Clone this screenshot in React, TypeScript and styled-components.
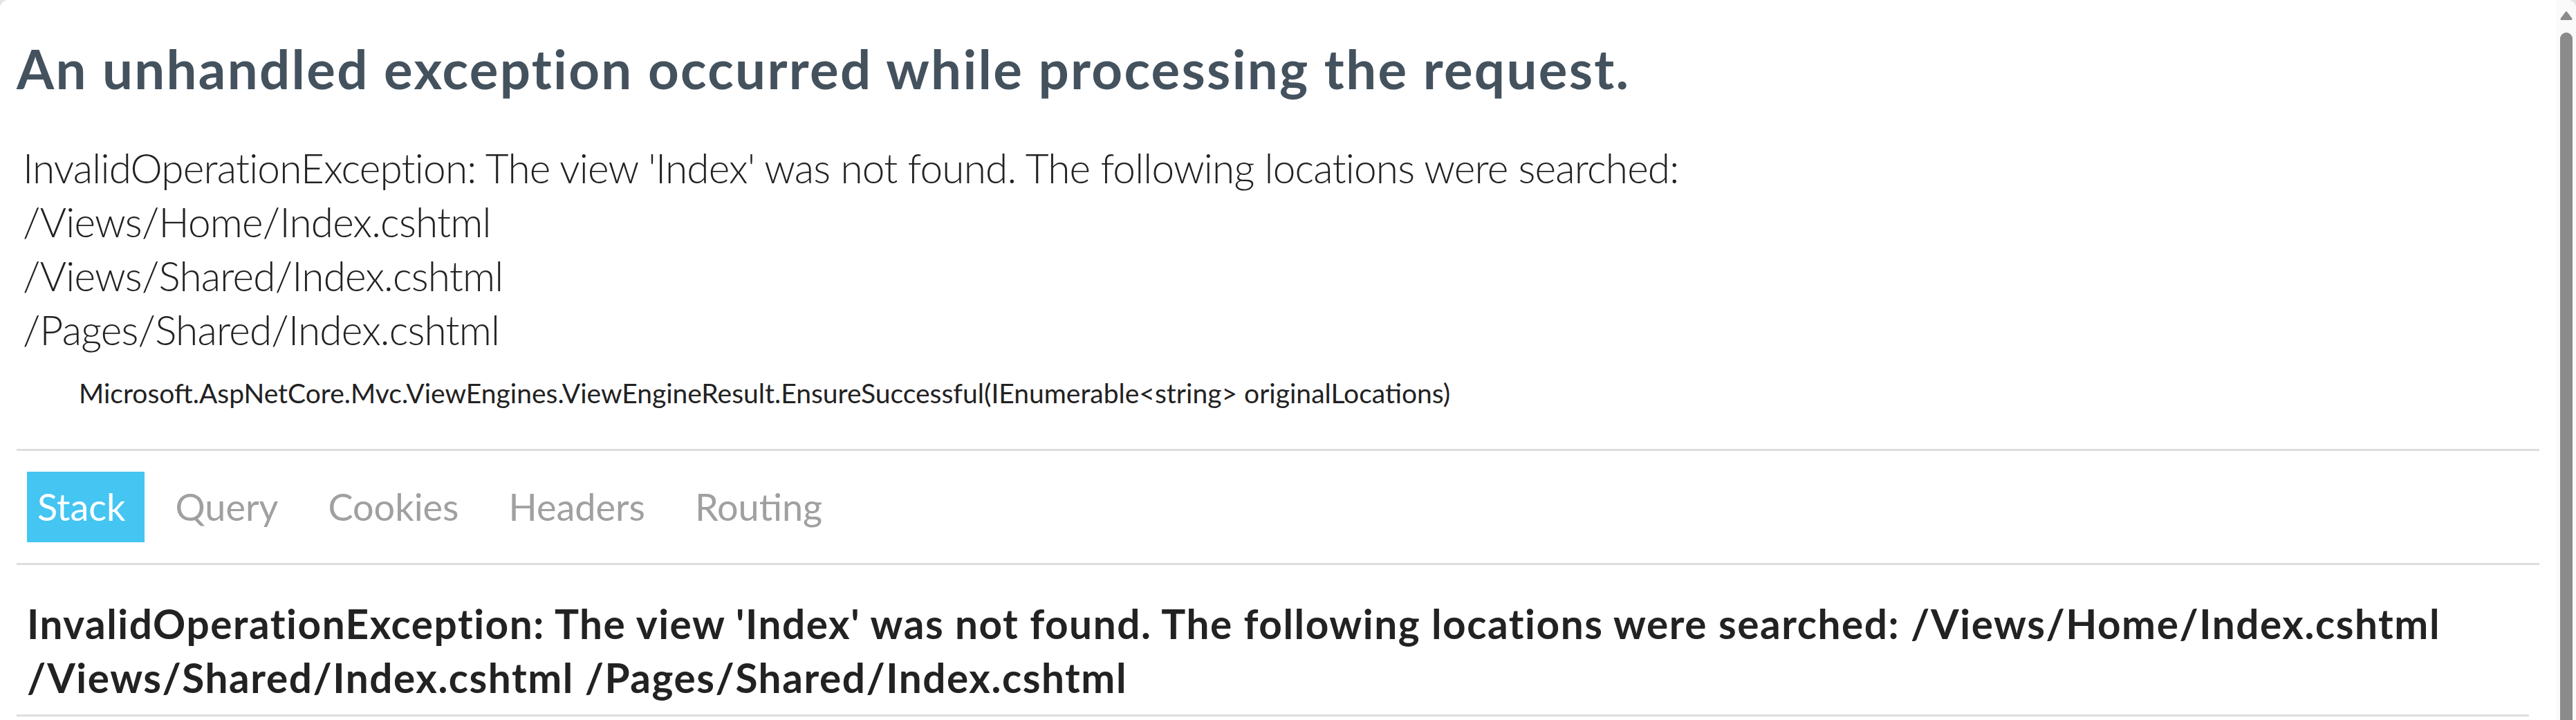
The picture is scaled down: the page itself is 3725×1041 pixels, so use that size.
import React from "react";
import styled, { createGlobalStyle } from "styled-components";

const GlobalStyle = createGlobalStyle`
  html, body {
    margin: 0;
    padding: 0;
    background: #e4e4e4;
  }
  body {
    font-family: Lato, "Noto Sans", "Liberation Sans", sans-serif;
    color: #222;
  }
`;

const Window = styled.div`
  display: flex;
  height: 100vh;
  overflow: hidden;
  background: #fff;
  border-radius: 12px 12px 0 0;
`;

const Main = styled.main`
  flex: 1;
  min-width: 0;
  padding: 0 24px;
  overflow: hidden;
`;

const Title = styled.h1`
  margin: 45px 0;
  padding-top: 2px;
  height: 102px;
  font-size: 78px;
  line-height: 104px;
  font-weight: 700;
  letter-spacing: 2.3px;
  color: #44525e;
  white-space: nowrap;
`;

const TitleError = styled.div`
  padding: 9px 9px 18px 9px;
  font-size: 58.5px;
  line-height: 78px;
  font-weight: 300;
  letter-spacing: -0.8px;
  color: #222;
`;

const Location = styled.div`
  margin: 9px 0 0 90px;
  font-size: 39px;
  line-height: 52px;
  color: #222;
`;

const Tabs = styled.ul`
  display: flex;
  align-items: center;
  list-style: none;
  margin: 55px 0 0 0;
  padding: 30px 0;
  border-top: 3px solid #ddd;
  border-bottom: 3px solid #ddd;
`;

const Tab = styled.li<{ $selected?: boolean }>`
  margin: 0 15px;
  padding: 15px 27px 15px 15px;
  font-size: 54px;
  line-height: 72px;
  color: ${(p) => (p.$selected ? "#fff" : "#a0a0a0")};
  background: ${(p) => (p.$selected ? "#44c5f2" : "transparent")};
  cursor: pointer;
`;

const StackError = styled.h2`
  margin: 30px 15px 0 0;
  padding: 15px;
  border-bottom: 3px solid #ddd;
  font-size: 58.5px;
  line-height: 78px;
  font-weight: 700;
  letter-spacing: 1.55px;
  color: #222;
`;

const Scrollbar = styled.div`
  width: 29px;
  flex: none;
  display: flex;
  flex-direction: column;
  align-items: center;
  background: #fafafa;
  padding: 16px 5px 0 6px;
  box-sizing: border-box;
  gap: 17px;
`;

const Thumb = styled.div`
  width: 18px;
  flex: 1;
  background: #8b8b8b;
  border-radius: 9px 9px 0 0;
`;

const ArrowUp = () => (
  <svg width="18" height="14" viewBox="0 0 18 14" aria-hidden="true">
    <path
      d="M7.6 1.4 Q9 -0.2 10.4 1.4 L17.2 10.6 Q18.4 13 15.8 13 L2.2 13 Q-0.4 13 0.8 10.6 Z"
      fill="#8b8b8b"
    />
  </svg>
);

const tabs = ["Stack", "Query", "Cookies", "Headers", "Routing"];

export default function App() {
  return (
    <>
      <GlobalStyle />
      <Window>
        <Main>
          <Title>An unhandled exception occurred while processing the request.</Title>
          <TitleError>
            InvalidOperationException: The view 'Index' was not found. The following locations were searched:
            <br />
            /Views/Home/Index.cshtml
            <br />
            /Views/Shared/Index.cshtml
            <br />
            /Pages/Shared/Index.cshtml
          </TitleError>
          <Location>
            Microsoft.AspNetCore.Mvc.ViewEngines.ViewEngineResult.EnsureSuccessful(IEnumerable&lt;string&gt; originalLocations)
          </Location>
          <Tabs>
            {tabs.map((t, i) => (
              <Tab key={t} $selected={i === 0}>
                {t}
              </Tab>
            ))}
          </Tabs>
          <StackError>
            InvalidOperationException: The view 'Index' was not found. The following locations were searched:
            /Views/Home/Index.cshtml /Views/Shared/Index.cshtml /Pages/Shared/Index.cshtml
          </StackError>
        </Main>
        <Scrollbar>
          <ArrowUp />
          <Thumb />
        </Scrollbar>
      </Window>
    </>
  );
}
